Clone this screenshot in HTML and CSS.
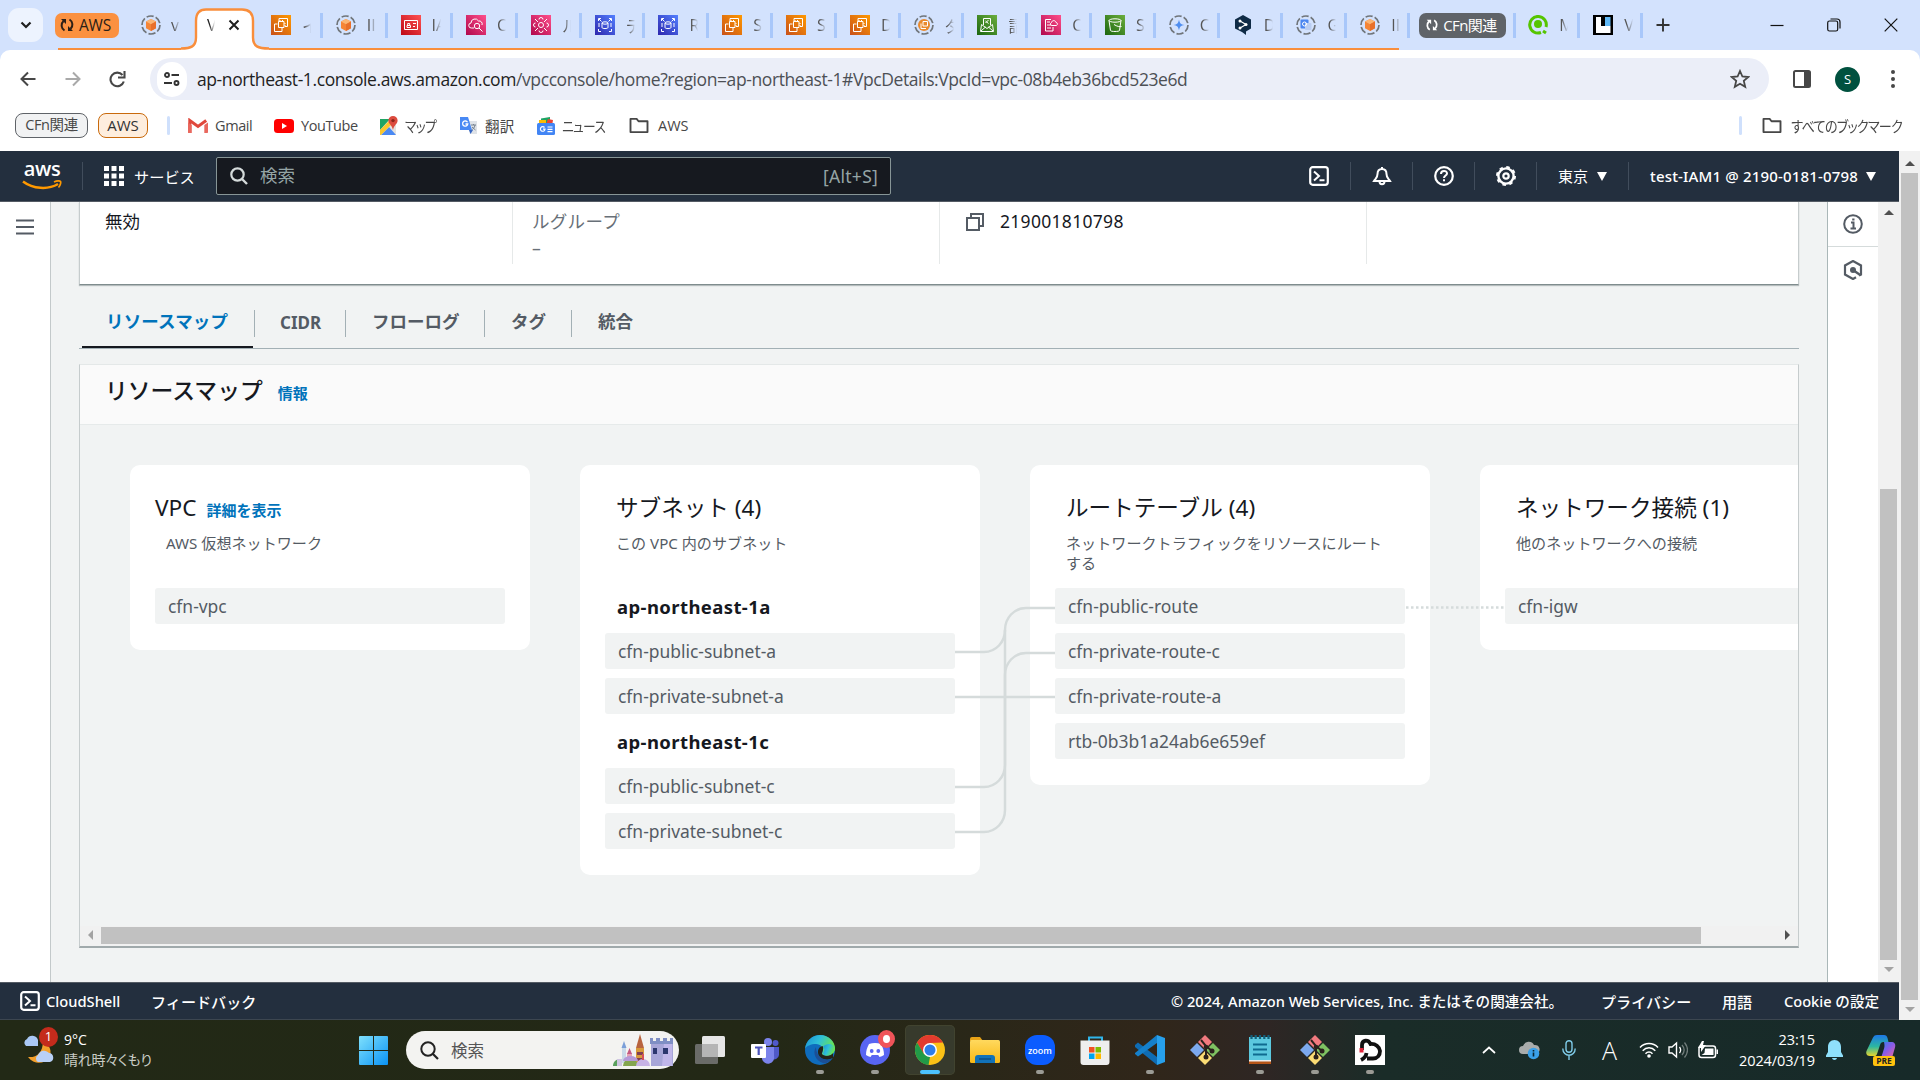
FILE: index.html
```html
<!DOCTYPE html>
<html lang="ja">
<head>
<meta charset="utf-8">
<title>VPC コンソール</title>
<link rel="stylesheet" href="styles.css">
</head>
<body>
<svg class="defs" width="0" height="0">
  <defs>
    <linearGradient id="g-or" x1="0" y1="1" x2="1" y2="0"><stop offset="0" stop-color="#c8511b"/><stop offset="1" stop-color="#f90"/></linearGradient>
    <linearGradient id="g-rd" x1="0" y1="1" x2="1" y2="0"><stop offset="0" stop-color="#bd0816"/><stop offset="1" stop-color="#ff5252"/></linearGradient>
    <linearGradient id="g-pk" x1="0" y1="1" x2="1" y2="0"><stop offset="0" stop-color="#b0084d"/><stop offset="1" stop-color="#ff4f8b"/></linearGradient>
    <linearGradient id="g-bl" x1="0" y1="1" x2="1" y2="0"><stop offset="0" stop-color="#2e27ad"/><stop offset="1" stop-color="#527fff"/></linearGradient>
    <linearGradient id="g-gr" x1="0" y1="1" x2="1" y2="0"><stop offset="0" stop-color="#1b660f"/><stop offset="1" stop-color="#6cae3e"/></linearGradient>
    <linearGradient id="g-win" x1="0" y1="0" x2="1" y2="1"><stop offset="0" stop-color="#7fe0fc"/><stop offset="1" stop-color="#0a93f5"/></linearGradient>
    <linearGradient id="g-edge" x1="0" y1="0" x2="1" y2="0.4"><stop offset="0" stop-color="#1b8fd6"/><stop offset=".5" stop-color="#2fc0d8"/><stop offset="1" stop-color="#6ce64c"/></linearGradient>
    <linearGradient id="g-fold" x1="0" y1="0" x2="0" y2="1"><stop offset="0" stop-color="#ffd95e"/><stop offset="1" stop-color="#f9b916"/></linearGradient>
    <linearGradient id="g-cop" x1="0" y1="0" x2="1" y2="1"><stop offset="0" stop-color="#1a8cf0"/><stop offset=".5" stop-color="#8a5be8"/><stop offset="1" stop-color="#ff6b8a"/></linearGradient>
    <linearGradient id="g-cop2" x1="0" y1="0" x2="0" y2="1"><stop offset="0" stop-color="#1d78e8"/><stop offset=".55" stop-color="#2cb7a0"/><stop offset="1" stop-color="#e8d52c"/></linearGradient>
    <symbol id="ring" viewBox="0 0 20 20"><circle cx="10" cy="10" r="9" fill="none" stroke="#70757a" stroke-width="1.7" stroke-dasharray="7.2 2.2"/></symbol>
    <symbol id="cube" viewBox="0 0 20 20"><use href="#ring"/><path d="M10 4l5 2.6v6.6L10 16l-5-2.8V6.600z" fill="#f58536"/><path d="M10 4l5 2.600-5 2.600-5-2.600z" fill="#fbb573"/><path d="M10 9.200l5-2.600v6.600L10 16z" fill="#e8702a"/></symbol>
    <symbol id="ec2" viewBox="0 0 20 20"><path fill="url(#g-or)" d="M0 0h20v20H0z"/><path fill="none" stroke="#fff" d="M6.500 9H3.500v7.500H11V13M8 3.500h8.500v8H14M8 3.500v3M7.500 6.500h5.500v6H7.500zM9 5v1M11.500 5v1M13.500 8.500h1M13.500 10.500h1"/></symbol>
    <symbol id="iam" viewBox="0 0 20 20"><path fill="url(#g-rd)" d="M0 0h20v20H0z"/><path fill="none" stroke="#fff" d="M3.500 5.500h13v9h-13zM6 10.500h3.500v2H6zM6.700 10V8.500h2V10M12 8.500h3M12 11.500h2"/></symbol>
    <symbol id="cw" viewBox="0 0 20 20"><path fill="url(#g-pk)" d="M0 0h20v20H0z"/><path fill="none" stroke="#fff" d="M8 13H5.500a2.500 2.500 0 0 1-.5-5 4 4 0 0 1 7.500-2 3 3 0 0 1 3.500 4M13 13l3.500 3.500"/><circle cx="11" cy="11" r="2.700" fill="none" stroke="#fff"/></symbol>
    <symbol id="rules" viewBox="0 0 20 20"><path fill="url(#g-pk)" d="M0 0h20v20H0z"/><circle cx="10" cy="10" r="2.500" fill="none" stroke="#fff"/><path d="M4 4l3 3M16 4l-3 3M4 16l3-3M16 16l-3-3M8 4.500a2 2 0 1 1 4 0M8 15.500a2 2 0 1 0 4 0M4.500 8a2 2 0 1 0 0 4M15.500 8a2 2 0 1 1 0 4" fill="none" stroke="#fff"/></symbol>
    <symbol id="rds" viewBox="0 0 20 20"><path fill="url(#g-bl)" d="M0 0h20v20H0z"/><path fill="none" stroke="#fff" d="M3.500 6V3.500H6M14 3.500h2.500V6M3.500 14v2.500H6M14 16.500h2.500V14M4 8v4M16 8v4M7 8v4.500c0 1.400 6 1.400 6 0V8M4 4l2.500 2.500M16 4l-2.500 2.500"/><ellipse cx="10" cy="8" rx="3" ry="1.200" fill="none" stroke="#fff"/></symbol>
    <symbol id="mail" viewBox="0 0 20 20"><path fill="url(#g-gr)" d="M0 0h20v20H0z"/><path fill="none" stroke="#fff" d="M6.500 10V3.500h7V10M4.500 9.500L3.500 16.500h13l-1-7-5.500 4zM4 16l4.500-4M16 16l-4.500-4M8.500 6l3 2.500M11.500 5l-3 3"/></symbol>
    <symbol id="cfn" viewBox="0 0 20 20"><path fill="url(#g-pk)" d="M0 0h20v20H0z"/><path fill="none" stroke="#fff" d="M12 12v4H4.500V4.500H10M6 7h3M6 10h4M6 13h4M11 10.500h4.500c1.500-1 1-3-.5-3-.5-2.500-4-2.500-4.500 0-1.500.5-1.500 3 .5 3z"/></symbol>
    <symbol id="s3" viewBox="0 0 20 20"><path fill="url(#g-gr)" d="M0 0h20v20H0z"/><path fill="none" stroke="#fff" d="M4 5.500l1.500 10c0 1.300 9 1.300 9 0L16 5.500M9 9.500c3 2 6 2.500 7.500 2"/><ellipse cx="10" cy="5.500" rx="6" ry="1.700" fill="none" stroke="#fff"/></symbol>
    <symbol id="sync" viewBox="0 0 16 16"><path fill="none" stroke="currentColor" stroke-width="2" d="M5.500 13.500A6 6 0 0 1 4.500 4M10.500 2.500A6 6 0 0 1 11.500 12"/><path fill="currentColor" d="M2 2h5v5zM14 14H9V9z"/></symbol>
    <symbol id="folder" viewBox="0 0 22 18"><path d="M2 2h6.500l2 2.500H20V16H2z" fill="none" stroke="#474747" stroke-width="2" stroke-linejoin="round"/></symbol>
    <symbol id="shell" viewBox="0 0 20 20"><rect x="1.200" y="1.200" width="17.600" height="17.600" rx="2.500" fill="none" stroke="#fff" stroke-width="2.200"/><path d="M5 5.500l5 4.500-5 4.500M10.500 14.300h5" fill="none" stroke="#fff" stroke-width="2"/></symbol>
    <symbol id="git" viewBox="0 0 30 30"><path d="M15 0l7 7-7 7-7-7z" fill="#f27a7f"/><path d="M23 8l7 7-7 7-7-7z" fill="#7fc262"/><path d="M7 8l7 7-7 7-7-7z" fill="#7ca9ee"/><path d="M15 16l7 7-7 7-7-7z" fill="#fbdc74"/><path d="M11 5l5 6v11M16 11l6 5" stroke="#2b211c" stroke-width="2" fill="none"/><circle cx="16" cy="12" r="2.300" fill="#2b211c"/><circle cx="16" cy="22" r="2.500" fill="#2b211c"/><circle cx="22" cy="16" r="2.500" fill="#2b211c"/></symbol>
  </defs>
</svg>

<div class="screen">
  <header class="tabstrip">
    <div class="tabsearch"><svg width="12" height="8" viewBox="0 0 12 8"><path d="M1.500 1.500L6 6l4.500-4.500" fill="none" stroke="#1f1f1f" stroke-width="2.200"/></svg></div>
    <div class="chip chip-orange"><svg width="16" height="16"><use href="#sync"/></svg><span>AWS</span></div>
    <div class="tab tab-first"><svg width="20" height="20"><use href="#cube"/></svg><span class="t">v</span></div>
    <div class="tab-active">
      <svg class="tab-shape" width="88" height="42" viewBox="0 0 88 42"><path d="M0 42v-1.500c10 0 15-2 15-11V13C15 5 19 1.500 25 1.500h36c7 0 11 4 11 11.500v16.500c0 9 5 11 16 11V42z" fill="#fff"/><path d="M0 40.500c10 0 15-2 15-11V13C15 5 19 1.500 25 1.500h36c7 0 11 4 11 11.500v16.500c0 9 5 11 16 11" fill="none" stroke="#f98e3c" stroke-width="2.400"/></svg>
      <span class="t">V</span><svg class="x" width="12" height="12" viewBox="0 0 12 12"><path d="M1.500 1.500l9 9M10.500 1.500l-9 9" stroke="#1f1f1f" stroke-width="2"/></svg>
    </div>
    <div class="tab w65"><svg width="20" height="20"><use href="#ec2"/></svg><span class="t">イ</span></div>
    <div class="tab w65"><svg width="20" height="20"><use href="#cube"/></svg><span class="t">II</span></div>
    <div class="tab w66"><svg width="20" height="20"><use href="#iam"/></svg><span class="t">IA</span></div>
    <div class="tab w65"><svg width="20" height="20"><use href="#cw"/></svg><span class="t">C</span></div>
    <div class="tab"><svg width="20" height="20"><use href="#rules"/></svg><span class="t">ル</span></div>
    <div class="tab"><svg width="20" height="20"><use href="#rds"/></svg><span class="t">デ</span></div>
    <div class="tab"><svg width="20" height="20"><use href="#rds"/></svg><span class="t">R</span></div>
    <div class="tab"><svg width="20" height="20"><use href="#ec2"/></svg><span class="t">S</span></div>
    <div class="tab"><svg width="20" height="20"><use href="#ec2"/></svg><span class="t">S</span></div>
    <div class="tab"><svg width="20" height="20"><use href="#ec2"/></svg><span class="t">D</span></div>
    <div class="tab"><svg width="20" height="20" viewBox="0 0 20 20"><use href="#ring"/><circle cx="10" cy="10" r="6" fill="#e98a2c"/><path d="M7 8.500v5h5M9 6.500h4.500V11H9z" stroke="#fff" fill="none"/></svg><span class="t">ダ</span></div>
    <div class="tab"><svg width="20" height="20"><use href="#mail"/></svg><span class="t">請</span></div>
    <div class="tab"><svg width="20" height="20"><use href="#cfn"/></svg><span class="t">C</span></div>
    <div class="tab"><svg width="20" height="20"><use href="#s3"/></svg><span class="t">S</span></div>
    <div class="tab"><svg width="20" height="20" viewBox="0 0 20 20"><use href="#ring"/><path d="M10 4.500c.6 3.700 1.800 4.900 5.500 5.500-3.700.6-4.900 1.800-5.500 5.500-.6-3.700-1.800-4.900-5.500-5.500 3.700-.6 4.900-1.800 5.500-5.500z" fill="#4f8ef0"/></svg><span class="t">C</span></div>
    <div class="tab"><svg width="20" height="20" viewBox="0 0 20 20"><path d="M10 0l8 4.500v9L13 16.500V20l-4-3-7-3.500v-9z" fill="#0f2b46"/><path d="M7 6l6 3.500L7 13" stroke="#fff" stroke-width="1.200" fill="none"/><circle cx="7" cy="6" r="1.500" fill="#fff"/><circle cx="13" cy="9.500" r="1.500" fill="#fff"/><circle cx="7" cy="13" r="1.500" fill="#fff"/></svg><span class="t">D</span></div>
    <div class="tab"><svg width="20" height="20" viewBox="0 0 20 20"><use href="#ring"/><rect x="4.500" y="4.500" width="8" height="9" rx="1" fill="#4a86f0"/><rect x="9" y="8" width="6.500" height="7" rx="1" fill="#b9cdf2"/><circle cx="8.500" cy="9" r="2" fill="none" stroke="#fff"/></svg><span class="t">G</span></div>
    <div class="tab w63"><svg width="20" height="20"><use href="#cube"/></svg><span class="t">II</span></div>
    <div class="chip chip-grey"><svg width="14" height="14"><use href="#sync"/></svg><span>CFn関連</span></div>
    <div class="tab tab-sepl"><svg width="20" height="20" viewBox="0 0 20 20"><path d="M13 17.500A8.300 8.300 0 1 1 18 12" fill="none" stroke="#55c500" stroke-width="3"/><circle cx="10" cy="9" r="4" fill="#55c500"/><path d="M15 16l3 2" stroke="#55c500" stroke-width="3"/></svg><span class="t">M</span></div>
    <div class="tab w63"><svg width="20" height="20" viewBox="0 0 20 20"><path d="M0 0h20v20H0z"/><path d="M3 2h5v9h9.500v7H3z" fill="#fff"/><path d="M12 2h5.500v9H12z" fill="#60b8f5"/></svg><span class="t">V</span></div>
    <svg class="plus" width="14" height="14" viewBox="0 0 14 14"><path d="M7 .5v13M.5 7h13" stroke="#333" stroke-width="1.900"/></svg>
    <div class="winbtns">
      <svg width="14" height="14" viewBox="0 0 14 14"><path d="M.5 7.500h13" stroke="#111" stroke-width="1.200"/></svg>
      <svg width="14" height="14" viewBox="0 0 14 14"><rect x=".7" y="3" width="10" height="10" rx="1.800" fill="none" stroke="#111" stroke-width="1.200"/><path d="M3.500 1h6.500a3 3 0 0 1 3 3v6.500" fill="none" stroke="#111" stroke-width="1.200"/></svg>
      <svg width="14" height="14" viewBox="0 0 14 14"><path d="M.7.700l12.600 12.600M13.300.7L.7 13.300" stroke="#111" stroke-width="1.200"/></svg>
    </div>
  </header>

  <div class="toolbar">
    <svg class="ic-back" width="16" height="16" viewBox="0 0 16 16"><path d="M15.500 8H1.800M8 1.500L1.500 8 8 14.500" fill="none" stroke="#474747" stroke-width="2"/></svg>
    <svg class="ic-fwd" width="16" height="16" viewBox="0 0 16 16"><path d="M.5 8h13.700M8 1.500L14.500 8 8 14.500" fill="none" stroke="#a9a9a9" stroke-width="2"/></svg>
    <svg class="ic-rel" width="17" height="17" viewBox="0 0 17 17"><path d="M14.800 10.500A6.800 6.800 0 1 1 13.500 4M15.500 0v6.500H9" fill="none" stroke="#474747" stroke-width="2.100"/></svg>
    <div class="omni">
      <div class="site"><svg width="16" height="14" viewBox="0 0 16 14"><circle cx="3" cy="3" r="2" fill="none" stroke="#333" stroke-width="1.900"/><path d="M7.500 3H15M0 11h8" stroke="#333" stroke-width="1.900"/><circle cx="12.500" cy="11" r="2" fill="none" stroke="#333" stroke-width="1.900"/></svg></div>
      <span class="url"><b>ap-northeast-1.console.aws.amazon.com</b>/vpcconsole/home?region=ap-northeast-1#VpcDetails:VpcId=vpc-08b4eb36bcd523e6d</span>
      <svg class="star" width="20" height="20" viewBox="0 0 20 20"><path d="M10 2l2.400 5.500 5.900.5-4.500 3.900 1.400 5.900L10 14.700l-5.200 3.100 1.400-5.900L1.700 8l5.900-.5z" fill="none" stroke="#474747" stroke-width="1.800"/></svg>
    </div>
    <svg class="panel" width="18" height="18" viewBox="0 0 18 18"><rect x="1" y="1" width="16" height="16" rx="1.500" fill="none" stroke="#474747" stroke-width="2"/><path d="M11 1h6v16h-6z" fill="#474747"/></svg>
    <div class="avatar">S</div>
    <svg class="dots" width="4" height="18" viewBox="0 0 4 18"><circle cx="2" cy="2" r="2" fill="#474747"/><circle cx="2" cy="9" r="2" fill="#474747"/><circle cx="2" cy="16" r="2" fill="#474747"/></svg>
  </div>

  <div class="bookmarks">
    <div class="bchip grey">CFn関連</div>
    <div class="bchip orange">AWS</div>
    <i class="bsep"></i>
    <div class="bm w-gmail"><svg width="20" height="16" viewBox="0 0 20 16"><path d="M1.800 15V2.500l8.200 6 8.200-6" fill="none" stroke="#e0483c" stroke-width="3"/><path d="M0 4.500v9.500c0 .6.400 1 1 1h2.700V7z" fill="#e9685e"/><path d="M20 4.500v9.500c0 .6-.4 1-1 1h-2.700V7z" fill="#e9685e"/></svg><span>Gmail</span></div>
    <div class="bm w-yt"><svg width="20" height="14" viewBox="0 0 20 14"><rect width="20" height="14" rx="3.500" fill="#f00"/><path d="M8 4l5 3-5 3z" fill="#fff"/></svg><span>YouTube</span></div>
    <div class="bm w-map"><svg width="19" height="20" viewBox="0 0 19 20"><path d="M1 3h16v16H1z" fill="#e5e3df"/><path d="M1 3h10L1 14z" fill="#1fa463"/><path d="M2 19l8-8 7 8z" fill="#4a89f3"/><path d="M1 14L12 3l3 3L2 19H1z" fill="#fbc62d"/><path d="M14 0a4.600 4.600 0 0 0-4.600 4.600C9.400 8 13 9 14 14c1-5 4.600-6 4.600-9.400A4.600 4.600 0 0 0 14 0z" fill="#dc4b3e"/><circle cx="14" cy="4.600" r="1.700" fill="#8c251a"/></svg><span class="kana">マップ</span></div>
    <div class="bm w-tr"><svg width="19" height="19" viewBox="0 0 19 19"><path d="M7 5h11v13H11z" fill="#dfe3e8"/><path d="M1 1h8l4 13H1z" fill="#4889f4"/><path d="M10 14h4l-2.500 4z" fill="#3364c4"/><path d="M8.500 6.300A2.600 2.600 0 1 0 8.800 8H6.500" fill="none" stroke="#fff" stroke-width="1.300"/><path d="M12 9h5M14.500 8v1M16 9c-.5 3-2 4-3.500 5M13 11l3.500 3" stroke="#76828f" fill="none"/></svg><span class="kanji">翻訳</span></div>
    <div class="bm w-nw"><svg width="18" height="18" viewBox="0 0 18 18"><path d="M4 1.500l9-1.500V8H4z" fill="#1fa463"/><path d="M11 2l5 1-1 6-6-2z" fill="#ea4335"/><path d="M2 3h7v7H2z" fill="#fbbc04"/><rect y="6" width="18" height="12" rx="1.500" fill="#4285f4"/><path d="M7.500 10.500A2.300 2.300 0 1 0 8 12.200H6M10.500 10h5M10.500 12.300h5M10.500 14.600h5" stroke="#fff" stroke-width="1.200" fill="none"/></svg><span class="kana">ニュース</span></div>
    <div class="bm"><svg width="22" height="17"><use href="#folder"/></svg><span>AWS</span></div>
    <div class="allbm"><i class="bsep"></i><svg width="22" height="17"><use href="#folder"/></svg><span class="kana kana-end">すべてのブックマーク</span></div>
  </div>

  <div class="page">
    <div class="console">
      <nav class="awsnav">
        <div class="awslogo"><span>aws</span><svg width="40" height="12" viewBox="0 0 40 12"><path d="M1 1.500c10 7.500 25 8.500 35 2.500" fill="none" stroke="#f90" stroke-width="2.500"/><path d="M32 2c3-1.500 6-1.300 6.500-.5s0 4-2 6" fill="none" stroke="#f90" stroke-width="1.700"/></svg></div>
        <i class="nsep"></i>
        <svg class="grid9" width="20" height="20" viewBox="0 0 20 20"><path d="M0 0h5v5H0zM7.500 0h5v5h-5zM15 0h5v5h-5zM0 7.500h5v5H0zM7.500 7.500h5v5h-5zM15 7.500h5v5h-5zM0 15h5v5H0zM7.500 15h5v5h-5zM15 15h5v5h-5z" fill="#fff"/></svg>
        <span class="svc">サービス</span>
        <div class="search"><svg width="18" height="18" viewBox="0 0 18 18"><circle cx="7.500" cy="7.500" r="6.200" fill="none" stroke="#d5dbdb" stroke-width="2.200"/><path d="M12 12l5 5" stroke="#d5dbdb" stroke-width="2.400"/></svg><span class="ph">検索</span><span class="alt">[Alt+S]</span></div>
        <div class="nr">
          <div class="nb b1"><svg width="20" height="20"><use href="#shell"/></svg></div>
          <div class="nb b2"><svg width="20" height="20" viewBox="0 0 20 20"><path d="M10 1v2M10 3c-3.500 0-4.500 2.500-4.500 5 0 4-2 4.500-3.500 7h16c-1.500-2.500-3.500-3-3.500-7 0-2.500-1-5-4.500-5z" fill="none" stroke="#fff" stroke-width="2"/><path d="M7.500 15.500a2.500 2.700 0 0 0 5 0" fill="none" stroke="#fff" stroke-width="2"/></svg></div>
          <div class="nb b3"><svg width="20" height="20" viewBox="0 0 20 20"><circle cx="10" cy="10" r="8.800" fill="none" stroke="#fff" stroke-width="2.200"/><path d="M7 8c0-4 6-4 6-.5 0 2-3 2-3 4.500M10 13.200v2" fill="none" stroke="#fff" stroke-width="2"/></svg></div>
          <div class="nb b4"><svg width="20" height="20" viewBox="0 0 20 20"><circle cx="10" cy="10" r="7.600" fill="none" stroke="#fff" stroke-width="2.400"/><circle cx="10" cy="10" r="9" fill="none" stroke="#fff" stroke-width="2" stroke-dasharray="3.500 3.570"/><circle cx="10" cy="10" r="2.700" fill="none" stroke="#fff" stroke-width="2.200"/></svg></div>
          <div class="nb region"><span>東京</span><i class="tri"></i></div>
          <div class="acct"><span>test-IAM1 @ 2190-0181-0798</span><i class="tri"></i></div>
        </div>
      </nav>

      <div class="body">
        <aside class="left"><svg width="18" height="16" viewBox="0 0 18 16"><path d="M0 1.500h18M0 8h18M0 14.500h18" stroke="#545b64" stroke-width="2.200"/></svg></aside>
        <main class="main">
          <section class="info">
            <div class="c"><span class="dark">無効</span></div>
            <div class="c"><span class="lab">ルグループ</span><span class="dash">–</span></div>
            <div class="c"><span class="cp"><svg width="18" height="18" viewBox="0 0 18 18"><path d="M1 5h12v12H1zM5 4V1h12v12h-3" fill="none" stroke="#545b64" stroke-width="2"/></svg><span class="num">219001810798</span></span></div>
            <div class="c"></div>
          </section>
          <div class="tabs">
            <div class="tb on">リソースマップ</div><div class="tb cidr">CIDR</div><div class="tb flow">フローログ</div><div class="tb tag">タグ</div><div class="tb integ">統合</div>
          </div>
          <section class="map">
            <h2>リソースマップ<a>情報</a></h2>
            <div class="canvas">
              <div class="card">
                <div class="hd vpc"><h3>VPC<a>詳細を表示</a></h3><p>AWS 仮想ネットワーク</p></div>
                <div class="item">cfn-vpc</div>
              </div>
              <div class="card">
                <div class="hd"><h3>サブネット (4)</h3><p>この VPC 内のサブネット</p></div>
                <h4>ap-northeast-1a</h4>
                <div class="item">cfn-public-subnet-a</div>
                <div class="item">cfn-private-subnet-a</div>
                <h4>ap-northeast-1c</h4>
                <div class="item">cfn-public-subnet-c</div>
                <div class="item">cfn-private-subnet-c</div>
              </div>
              <div class="card">
                <div class="hd"><h3>ルートテーブル (4)</h3><p>ネットワークトラフィックをリソースにルート<br>する</p></div>
                <div class="item">cfn-public-route</div>
                <div class="item">cfn-private-route-c</div>
                <div class="item">cfn-private-route-a</div>
                <div class="item">rtb-0b3b1a24ab6e659ef</div>
              </div>
              <div class="card">
                <div class="hd"><h3>ネットワーク接続 (1)</h3><p>他のネットワークへの接続</p></div>
                <div class="item">cfn-igw</div>
              </div>
              <svg class="wires" width="560" height="260" viewBox="0 0 560 260"><g fill="none" stroke="#d5dbdb" stroke-width="2.500"><path d="M0 62h29c12 0 21-10 21-22 0-12 9-22 21-22h29"/><path d="M0 107h100"/><path d="M0 197h29c12 0 21-10 21-22V40"/><path d="M0 242h29c12 0 21-10 21-22V85c0-12 9-22 21-22h29"/><path d="M451 17.500h99" stroke-width="2.500" stroke-dasharray="2.500 2.500"/></g></svg>
            </div>
            <div class="hbar"><i class="al"></i><i class="thumb"></i><i class="ar"></i></div>
          </section>
        </main>
        <aside class="right">
          <div class="ri"><svg width="20" height="20" viewBox="0 0 20 20"><circle cx="10" cy="10" r="8.800" fill="none" stroke="#545b64" stroke-width="2"/><path d="M8 8.500h2.500v6M7.500 14.500h5.500M9.200 5.500h2.300" stroke="#545b64" stroke-width="2" fill="none"/></svg></div>
          <div class="ri"><svg width="20" height="20" viewBox="0 0 20 20"><path d="M13 17.200L10 19l-8-4.500v-9L10 1l8 4.500v9l-2 1" fill="none" stroke="#545b64" stroke-width="2.200"/><circle cx="10" cy="10" r="3" fill="#545b64"/><path d="M10 10l6.500 4.500" stroke="#545b64" stroke-width="2.400"/></svg></div>
        </aside>
        <div class="vbar inner"><i class="up"></i><i class="vthumb"></i><i class="dn"></i></div>
      </div>

      <footer class="awsfoot">
        <svg width="20" height="20"><use href="#shell"/></svg><span class="cs">CloudShell</span><span class="fb">フィードバック</span>
        <span class="copy">© 2024, Amazon Web Services, Inc. またはその関連会社。</span><span class="pv">プライバシー</span><span class="yg">用語</span><span class="ck">Cookie の設定</span>
      </footer>
    </div>
    <div class="vbar outer"><i class="up"></i><i class="vthumb"></i><i class="dn"></i></div>
  </div>

  <div class="taskbar">
    <div class="weather"><svg width="36" height="38" viewBox="0 0 36 38"><path d="M3 15a4 4 0 0 1 1-7 6 6 0 0 1 11 1v6z" fill="#a9c8f5"/><path d="M20 10c6 3 10 10 6 17-4 5-14 8-21-1 8 1 15-4 15-16z" fill="#f4a02c"/><path d="M15 31a4 4 0 0 1 0-7 6.500 6.500 0 0 1 11-2c5 0 6 8 1 9z" fill="#b9d0f7"/></svg><i class="badge">1</i><div class="wt"><span>9°C</span><span class="w2">晴れ時々くもり</span></div></div>
    <svg class="win" width="29" height="29" viewBox="0 0 29 29"><path d="M0 1a1 1 0 0 1 1-1h13v14H0zM15 0h13a1 1 0 0 1 1 1v13H15zM0 15h14v14H1a1 1 0 0 1-1-1zM15 15h14v13a1 1 0 0 1-1 1H15z" fill="url(#g-win)"/></svg>
    <div class="tsearch"><svg width="19" height="19" viewBox="0 0 19 19"><circle cx="8" cy="8" r="6.700" fill="none" stroke="#222" stroke-width="2"/><path d="M12.500 12.500l5.500 5.500" stroke="#222" stroke-width="2.200"/></svg><span>検索</span>
      <svg class="castle" width="60" height="34" viewBox="0 0 60 34"><path d="M37 10V5h3v3h3V5h4v3h3V5h4v3h3V5h3v28H38V11z" fill="#a7a6d8"/><path d="M37 5h3v3h3V5h4v3h3V5h4v3h3V5h3v6H37z" fill="#7f8fc4"/><path d="M51 11h8v22H49z" fill="#c0b7ea"/><path d="M40 15h4v6h-4zM50 15h5v6h-5z" fill="#2b376e"/><path d="M23 15h8v18h-8z" fill="#d79a3b"/><path d="M27 1l4 14h-8z" fill="#b8643f"/><path d="M24 19h6v3h-6zM24 25h6v3h-6z" fill="#7e3e55"/><path d="M9 14h4v16H9z" fill="#c9d9e8"/><path d="M11 8l2.500 7h-5z" fill="#7b9fd8"/><path d="M14 20h5v9h-5z" fill="#e5a2b4"/><path d="M16.500 15l2.500 6h-5z" fill="#c55a80"/><path d="M0 33c0-4 3-7 7-7v7z" fill="#5aa05c"/><path d="M10 33a7.500 7.500 0 0 1 15 0z" fill="#84a64f"/><path d="M10 28a7.500 5 0 0 1 15 0z" fill="#b59ad8"/><path d="M4 26h5v7H4z" fill="#cfc5e2"/><path d="M23 33a7 7 0 0 1 14 0z" fill="#c7b3e5"/><path d="M30 21v6" stroke="#d4505a" stroke-width="2"/></svg></div>
    <div class="apps">
      <div class="app"><svg width="30" height="30" viewBox="0 0 30 30"><rect x="7" y="1" width="23" height="21" rx="1.500" fill="#e6e6e6"/><rect y="9" width="23" height="20" rx="1.500" fill="#777" opacity=".85"/><path d="M7 9h16v13H7z" fill="#b5b5b5"/></svg></div>
      <div class="app"><svg width="28" height="28" viewBox="0 0 28 28"><circle cx="17" cy="6" r="4" fill="#7b83eb"/><circle cx="24.500" cy="7" r="3" fill="#5059c9"/><path d="M21 11h7v8a5 5 0 0 1-7 4z" fill="#5059c9"/><path d="M11 11h12v9a6 6 0 0 1-12 3z" fill="#7b83eb"/><rect y="8" width="15" height="14" rx="1" fill="#fff"/><path d="M4 11.500h7.500M7.700 11.500V19" stroke="#4b53bc" stroke-width="2.200"/></svg></div>
      <div class="app run"><svg width="30" height="30" viewBox="0 0 30 30"><circle cx="15" cy="15" r="15" fill="#0f6cbd"/><path d="M0 14C1 5 8 0 15 0c9 0 15 7 15 13 0 5-4 8-8 8-3 0-5-1-5-2s1-2 1-4-2-6-7-6C6 9 1 11 0 14z" fill="url(#g-edge)"/><path d="M11 12c-4 6 0 14 7 16 3 1 6-1 9-4-9 3-16-3-16-12z" fill="#1b4f96"/><path d="M17.500 11c2 3-1 6-.5 8 1 2 8 3 11-1v5c-6 3-14 1-15-5-.5-3 1-6 4.500-7z" fill="#242416"/><path d="M18 12c4 3-2 6 1 8 4 2 11-1 11-7-1-4-8-6-12-1z" fill="url(#g-edge)"/></svg></div>
      <div class="app run"><svg width="30" height="30" viewBox="0 0 30 30"><circle cx="15" cy="15" r="15" fill="#5865f2"/><path d="M9 9c4-1.500 8-1.500 12 0 2 3.500 3 7 3 11-1.500 1-3 1.700-4.500 2l-1.300-2h-6.400l-1.300 2C9 21.700 7.500 21 6 20c0-4 1-7.500 3-11z" fill="#fff"/><circle cx="11.700" cy="16" r="1.900" fill="#5865f2"/><circle cx="18.300" cy="16" r="1.900" fill="#5865f2"/></svg><i class="dbadge"></i></div>
      <div class="app run active"><svg width="30" height="30" viewBox="0 0 30 30"><circle cx="15" cy="15" r="15" fill="#fbc116"/><path d="M2 7.500A15 15 0 0 1 28 7.500L15 8 8.500 18.700z" fill="#e33b2e"/><path d="M2 7.500L8.800 18.800 15 22l-1.500 8A15 15 0 0 1 2 7.500z" fill="#229a48"/><circle cx="15" cy="15" r="7" fill="#fff"/><circle cx="15" cy="15" r="5.500" fill="#2f7de9"/></svg></div>
      <div class="app"><svg width="30" height="28" viewBox="0 0 30 28"><path d="M0 3a2 2 0 0 1 2-2h8l3 4h-13z" fill="#e8a317"/><rect y="4" width="30" height="23" rx="1.500" fill="url(#g-fold)"/><path d="M5 27v-5a3 3 0 0 1 3-3h14a3 3 0 0 1 3 3v5z" fill="#1272b8"/><path d="M9 23h12" stroke="#0b4f86" stroke-width="1.500"/></svg></div>
      <div class="app run"><svg width="30" height="30" viewBox="0 0 30 30"><rect width="30" height="30" rx="12" fill="#0b5cff"/></svg><span class="zt">zoom</span></div>
      <div class="app"><svg width="30" height="30" viewBox="0 0 30 30"><path d="M9 7V2.500h13V7" fill="none" stroke="#2fb5ea" stroke-width="2"/><path d="M.5 5.500h29V27a3 3 0 0 1-3 3h-23a3 3 0 0 1-3-3z" fill="#eee"/><path d="M9 12h5.500v5.500H9z" fill="#f25022"/><path d="M15.500 12H21v5.500h-5.500z" fill="#7fba00"/><path d="M9 18.500h5.500V24H9z" fill="#00a4ef"/><path d="M15.500 18.500H21V24h-5.500z" fill="#ffb900"/></svg></div>
      <div class="app run"><svg width="30" height="30" viewBox="0 0 30 30"><path d="M0 10l3-2.500L22 22v8L0 12z" fill="#0f6cb3"/><path d="M0 19l3 2.500L22 8V0L0 18z" fill="#1580cb"/><path d="M22 0l8 3v24l-8 3z" fill="#27a0ec"/></svg></div>
      <div class="app"><svg width="30" height="30"><use href="#git"/></svg></div>
      <div class="app run"><svg width="22" height="30" viewBox="0 0 22 30"><path d="M0 2h22v24H0z" fill="#5bc8de"/><path d="M0 26h22v3H0z" fill="#b65518"/><path d="M0 25h22v1.500H0z" fill="#eee"/><path d="M4 9.500h14M4 14.500h14M4 19.500h14" stroke="#0f6b8f" stroke-width="2"/><path d="M2.500 0v4M6.700 0v4M11 0v4M15.300 0v4M19.500 0v4" stroke="#12607c" stroke-width="2.200"/></svg></div>
      <div class="app run"><svg width="30" height="30"><use href="#git"/></svg></div>
      <div class="app run"><svg width="30" height="30" viewBox="0 0 30 30"><path fill="#fff" d="M0 0h30v30H0z"/><path d="M7 15V10C7 5 13 4 15.500 9c5-.5 9 3 9.500 7 0 4-2.500 7.500-7 7.500H12M6 25c3-1.500 5-3 5.500-7" fill="none" stroke="#111" stroke-width="3.800"/><path d="M4.500 13h4v4.500h-4z" fill="#e0263c"/></svg></div>
    </div>
    <div class="tray">
      <svg class="t1" width="14" height="8" viewBox="0 0 14 8"><path d="M1 7l6-5.500L13 7" fill="none" stroke="#fff" stroke-width="1.700"/></svg>
      <svg class="t2" width="21" height="20" viewBox="0 0 21 20"><path d="M4 14a4 4 0 0 1 0-8 6 6 0 0 1 11-1 4.500 4.500 0 0 1 2 9z" fill="#a9acab"/><circle cx="14.500" cy="13.500" r="5.800" fill="#3aa0e8"/><path d="M14.500 12.500v4M14.500 10v1.400" stroke="#0b2530" stroke-width="1.600"/></svg>
      <svg class="t3" width="14" height="20" viewBox="0 0 14 20"><rect x="4" y=".7" width="6" height="11.500" rx="3" fill="none" stroke="#7fcbe8" stroke-width="1.400"/><path d="M.8 8.500c0 9 12.400 9 12.400 0M7 15.500V20" fill="none" stroke="#7fcbe8" stroke-width="1.400"/></svg>
      <span class="ime">A</span>
      <svg class="t4" width="20" height="16" viewBox="0 0 20 16"><path d="M1 5.500c5-5.300 13-5.300 18 0M3.700 8.700c3.600-3.800 9-3.800 12.600 0M6.500 11.700c2-2.200 5-2.200 7 0" fill="none" stroke="#fff" stroke-width="1.500"/><circle cx="10" cy="14" r="1.800" fill="#fff"/></svg>
      <svg class="t5" width="20" height="18" viewBox="0 0 20 18"><path d="M1 6h3l4.500-4v14L4 12H1z" fill="none" stroke="#fff" stroke-width="1.400"/><path d="M11.500 6c1.500 2 1.500 4 0 6" stroke="#fff" fill="none" stroke-width="1.300"/><path d="M14 4c3 3.500 3 6.500 0 10M16.500 1.500c4 5 4 10 0 15" stroke="#6f7b79" fill="none" stroke-width="1.300"/></svg>
      <svg class="t6" width="21" height="18" viewBox="0 0 21 18"><rect x="1" y="5" width="16.500" height="11.500" rx="2.500" fill="none" stroke="#fff" stroke-width="1.500"/><path d="M7 7.500h8.500V14H3.500l3-2z" fill="#fff"/><path d="M18.500 8.500H20v4.500h-1.500zM4 0L0 7h3v4l5-7H5l1-4z" fill="#fff"/></svg>
      <div class="clock"><span>23:15</span><span>2024/03/19</span></div>
      <svg class="t7" width="17" height="20" viewBox="0 0 17 20"><path d="M8.500 0C4.500 0 2 3 2 7v5L0 15.500V17h17v-1.500L15 12V7c0-4-2.500-7-6.500-7zM6 18h5c-.5 2.500-4.500 2.500-5 0z" fill="#8fe0fb"/></svg>
      <div class="cop"><svg width="30" height="30" viewBox="0 0 30 30"><path d="M7 2.500C8 .8 9 0 11 0h7c2 0 3 1 3.500 3l1 4h-5c-2 0-3 1-3.500 3l-3 9c-.6 1.700-1.500 2-3 2H4c-3 0-4.500-2-3.500-5z" fill="url(#g-cop2)"/><path d="M18 7h7c3.500 0 5 2 4 5.500L26.500 21c-1 3-2 4-5 4H12c2 0 2.700-1 3.200-2.500l3-9.500c.7-2 0-5-.2-6z" fill="url(#g-cop)"/></svg><b>PRE</b></div>
    </div>
  </div>
</div>
</body>
</html>
```
FILE: styles.css
```css
* { box-sizing: border-box; }
body { margin: 0; overflow: hidden; font-family: "Noto Sans", "Noto Sans CJK JP", sans-serif; color: #16191f; }
svg { display: block; flex: none; }
i { font-style: normal; }
.defs { position: absolute; }
.screen { width: 1920px; height: 1080px; display: flex; flex-direction: column; background: #fff; overflow: hidden; }
.screen > * { flex: none; }

/* browser tab strip */
.tabstrip { height: 50px; background: linear-gradient(#f98e3c, #f98e3c) 58px 48px / 1341px 2px no-repeat #d3e2fd; display: flex; align-items: center; font: 16px "Open Sans", "Noto Sans CJK JP", sans-serif; color: #555; position: relative; z-index: 1; }
.tabstrip > * { flex: none; }
.tabsearch { width: 35px; height: 34px; margin-left: 8px; border-radius: 11px; background: #edf3fe; display: flex; align-items: center; justify-content: center; }
.chip { height: 25px; border-radius: 7px; display: flex; align-items: center; gap: 4px; font-size: 15.5px; letter-spacing: -.2px; white-space: nowrap; }
.chip-orange { width: 64px; margin-left: 12px; padding-left: 4px; background: #fb9140; color: #2c2017; }
.chip-grey { width: 87px; margin-left: 9px; padding-left: 6px; background: #5f6368; color: #fff; font-size: 15px; letter-spacing: -.6px; }
.chip-grey span { margin-top: -2px; }
.tab { width: 63.8px; height: 25px; display: flex; align-items: center; padding-left: 13px; gap: 11px; border-right: 3px solid #a8c7fa; }
.w63 { width: 63px; }
.w65 { width: 64.8px; }
.w66 { width: 65.5px; }
.tab-first { border: 0; width: 62px; padding-left: 22px; gap: 10px; }
.tab .t { width: 9px; overflow: hidden; white-space: nowrap; }
.tab .t, .tab-active .t { -webkit-mask-image: linear-gradient(90deg, #000 30%, transparent); mask-image: linear-gradient(90deg, #000 30%, transparent); }
.tab-active { width: 77px; height: 50px; position: relative; display: flex; align-items: center; padding-left: 26px; gap: 13px; }
.tab-active .t, .tab-active .x { position: relative; }
.tab-active .t { width: 8px; overflow: hidden; color: #222; }
.tab-shape { position: absolute; left: 0; top: 8px; }
.tab-sepl { width: 67px; margin-left: 7px; border-left: 3px solid #a8c7fa; padding-left: 12px; }
.plus { margin-left: 13px; }
.winbtns { margin-left: auto; margin-right: 22px; display: flex; gap: 43px; }

/* address row */
.toolbar { height: 58px; display: flex; align-items: center; background: #fff; border-radius: 10px 10px 0 0; box-shadow: 0 -10px 0 #d3e2fd; }
.toolbar > * { flex: none; }
.ic-back { margin-left: 20px; }
.ic-fwd { margin-left: 29px; }
.ic-rel { margin-left: 28px; }
.omni { width: 1619px; height: 42px; margin-left: 24px; border-radius: 21px; background: #ebeef8; display: flex; align-items: center; }
.site { width: 30px; height: 35px; margin-left: 7px; border-radius: 15px; background: #fff; display: flex; align-items: center; justify-content: center; }
.url { margin-left: 10px; font: 17.5px "Open Sans", sans-serif; color: #4d5055; letter-spacing: -.41px; white-space: nowrap; }
.url b { font-weight: 400; color: #1f1f1f; }
.star { margin-left: auto; margin-right: 19px; }
.panel { margin-left: 24px; }
.avatar { width: 25px; height: 25px; margin-left: 24px; border-radius: 50%; background: #00513f; color: #fff; font: 13px/25px "Open Sans", sans-serif; text-align: center; }
.dots { margin-left: 31px; }

/* bookmarks row */
.bookmarks { height: 43px; padding: 5px 18px 13px 15px; display: flex; align-items: center; font: 14.5px "Open Sans", "Noto Sans CJK JP", sans-serif; color: #474747; white-space: nowrap; }
.bookmarks > * { flex: none; }
.bchip { height: 25px; border-radius: 8px; border: 1.500px solid #5f6368; line-height: 22px; text-align: center; background: #f1f2f3; }
.bchip.grey { width: 73px; letter-spacing: -.4px; }
.bchip.orange { width: 50px; margin-left: 10px; border-color: #c96a0c; background: #feeede; color: #333; font-size: 15px; }
.bsep { width: 3px; height: 19px; margin: 0 0 0 19px; background: #cfe0fc; border-radius: 2px; }
.bm { display: flex; align-items: center; gap: 6px; letter-spacing: -.4px; }
.bm svg { margin-right: 1px; }
.w-gmail { margin-left: 18px; width: 86px; }
.w-yt { width: 105px; }
.w-map { width: 80px; }
.w-tr { width: 78px; }
.w-nw { width: 91px; }
.bm:nth-of-type(8) span { margin-left: 1px; letter-spacing: 0; }
.kanji { letter-spacing: .3px; }
.kana { display: inline-block; font-feature-settings: "palt"; letter-spacing: -.8px; transform: scaleX(.88); transform-origin: 0 50%; }
.kana-end { transform: scaleX(.9); transform-origin: 100% 50%; margin-left: -14px; }
.allbm { margin-left: auto; display: flex; align-items: center; gap: 10px; }
.allbm svg { margin-left: 9px; }

/* console page */
.page { height: 869px; display: flex; }
.console { width: 1899px; display: flex; flex-direction: column; }
.awsnav { height: 51px; flex: none; background: #232f3e; border-bottom: 1px solid #545b64; display: flex; align-items: center; color: #fff; white-space: nowrap; }
.awsnav > * { flex: none; }
.awslogo { width: 40px; margin-left: 22px; height: 29px; }
.awslogo span { display: block; height: 18px; font: 600 20px/14px "Open Sans", sans-serif; letter-spacing: -.3px; text-align: center; }
.nsep { width: 1px; height: 28px; margin-left: 20px; background: #414d5c; }
.grid9 { margin-left: 21px; }
.svc { margin-left: 10px; width: 62px; font-size: 15.2px; margin-top: -1px; }
.search { width: 675px; height: 38px; margin-left: 20px; background: #16191f; border: 1px solid #879596; border-radius: 2px; display: flex; align-items: center; padding: 0 12px 0 13px; color: #95a5a6; font-size: 17.5px; }
.search .ph { margin-left: 12px; margin-top: -3px; }
.search .alt { margin-left: auto; margin-top: -1px; letter-spacing: .25px; }
.nr { margin-left: auto; display: flex; height: 28px; font-size: 15px; }
.nb { border-right: 1px solid #414d5c; display: flex; align-items: center; justify-content: center; width: 62px; }
.b1 { width: 63px; }
.region { width: 92px; gap: 9px; }
.region span { margin-top: -2px; }
.tri { width: 0; height: 0; border: 5px solid transparent; border-top: 9px solid #fff; border-bottom: 0; }
.acct { display: flex; align-items: center; gap: 8px; margin-left: 21px; margin-right: 23px; font-weight: 500; letter-spacing: .17px; }

.body { height: 780px; flex: none; display: flex; background: #f1f3f3; }
.left { width: 51px; background: #fff; border-right: 1px solid #c3c9ca; padding: 17px 0 0 16px; }
.main { width: 1776px; padding: 0 28px; overflow: hidden; }
.info { height: 83px; margin-bottom: 13px; background: #fff; border: solid #c6cccd; border-width: 0 1px; border-bottom: 1px solid #7f8c8d; box-shadow: 0 1px 1px #b5bcbd; display: flex; font-size: 17.5px; line-height: 27px; }
.info .c { width: 427px; height: 62px; padding: 6px 0 0 19px; border-right: 1px solid #e6e9e9; display: flex; flex-direction: column; }
.info .c:first-child { width: 433px; padding-left: 25px; }
.info .c:last-child { border: 0; }
.lab, .dash { color: #687078; }
.lab { letter-spacing: .3px; }
.cp { display: flex; align-items: center; gap: 16px; margin-left: 7px; }
.num { letter-spacing: .3px; }
.tabs { height: 51px; border-bottom: 1px solid #a3b0b5; display: flex; font: 700 17.5px/27px "Noto Sans", "Noto Sans CJK JP", sans-serif; color: #545b64; padding-top: 12px; margin-bottom: 15px; white-space: nowrap; }
.tb { height: 27px; border-right: 1px solid #a3b0b5; padding-left: 25px; line-height: 23px; }
.tb.on { width: 176px; color: #0073bb; height: 38px; border-right: 0; padding-left: 27px; letter-spacing: .15px; background: linear-gradient(#16191f, #16191f) 3px 36px / 171px 2px no-repeat, linear-gradient(#a3b0b5, #a3b0b5) 175px 0 / 1px 27px no-repeat; }
.tb.cidr { width: 91px; line-height: 26px; font-size: 17px; }
.tb.flow { width: 139px; padding-left: 26px; }
.tb.tag { width: 87px; padding-left: 26px; }
.tb.integ { border: 0; padding-left: 26px; }
.map { height: 584px; background: #f1f3f3; border: 1px solid #c6cccd; border-top-color: #e4e8e8; border-bottom: 2px solid #a0a9ab; }
h2 { height: 60px; margin: 0; padding-left: 25px; font: 500 22.8px/52px "Noto Sans", "Noto Sans CJK JP", sans-serif; background: #fafafa; border-bottom: 1px solid #e6eaea; }
h2 a { margin-left: 15px; font-size: 15px; font-weight: 700; color: #0073bb; }
.canvas { position: relative; height: 501px; padding: 40px 0 0 50px; display: flex; gap: 50px; align-items: flex-start; overflow: hidden; }
.card { width: 400px; flex: none; background: #fff; border-radius: 10px; padding: 25px 25px 17px; font-size: 17.45px; }
.hd { height: 98px; padding-left: 11px; white-space: nowrap; }
.hd h3 { margin: 0; font-weight: 400; font-size: 22.6px; line-height: 35px; height: 34px; }
.hd h3 a { margin-left: 10px; font-size: 15px; font-weight: 700; color: #0073bb; }
.hd.vpc h3 { margin-left: -11px; }
.hd p { margin: 9px 0 0; font-size: 15.1px; line-height: 20px; color: #545b64; }
.card h4 { margin: 0; padding-left: 12px; height: 45px; font: 700 18.500px/38px "Noto Sans", sans-serif; letter-spacing: .4px; }
.item { height: 36px; margin-bottom: 9px; padding-left: 13px; line-height: 36px; background: #f1f3f3; border-radius: 3px; color: #545b64; }
.wires { position: absolute; left: 875px; top: 165px; }
.hbar { height: 20px; background: #f1f1f1; display: flex; align-items: center; padding-bottom: 2px; }
.hbar .thumb { width: 1600px; height: 17px; background: #c1c1c1; margin: 0 0 0 11px; }
.al, .ar { width: 0; height: 0; border: 5px solid transparent; }
.al { border-right: 5px solid #a3a3a3; border-left: 0; margin-left: 8px; margin-right: -3px; }
.ar { border-left: 5px solid #505050; border-right: 0; margin-left: 84px; }
.right { width: 51px; background: #fff; border-left: 1px solid #aab7b8; }
.ri { height: 44px; padding: 12px 0 0 15px; }
.ri + .ri { border-top: 1px solid #d5dbdb; padding-top: 13px; }
.vbar { width: 21px; background: #f1f1f1; display: flex; flex-direction: column; align-items: center; }
.up, .dn { width: 0; height: 0; border: 5px solid transparent; }
.up { border-bottom: 5px solid #505050; border-top: 0; }
.dn { border-top: 5px solid #a3a3a3; border-bottom: 0; }
.vthumb { width: 17px; background: #c1c1c1; }
.inner .up { margin-top: 8px; }
.inner .vthumb { height: 471px; margin-top: 274px; }
.inner .dn { margin-top: 7px; }
.outer .up { margin-top: 10px; }
.outer .vthumb { height: 827px; margin-top: 7px; }
.outer .dn { margin-top: 7px; }

.awsfoot { height: 38px; flex: none; background: #232f3e; border-top: 1px solid #545b64; border-bottom: 1px solid #3c4650; display: flex; align-items: center; padding-left: 20px; color: #fff; font-size: 15.1px; font-weight: 500; white-space: nowrap; }
.awsfoot span { flex: none; margin-top: -1px; }
.cs { margin-left: 6px; width: 105px; font-size: 14.7px; }
.fb { width: 1020px; }
.copy { width: 430px; font-size: 14.6px; }
.pv { width: 121px; }
.yg { width: 62px; }
.ck { font-size: 14.600px; }

/* windows taskbar */
.taskbar { height: 60px; background: linear-gradient(90deg, #222916 0, #232816 40%, #30261a 60%, #2e2624 66%, #1a2c28 72%, #172a29 100%); display: flex; color: #fff; font: 14px "Open Sans", "Noto Sans CJK JP", sans-serif; align-items: center; white-space: nowrap; }
.taskbar > * { flex: none; }
.weather { width: 359px; padding-left: 23px; display: flex; position: relative; align-items: center; }
.badge { position: absolute; left: 39px; top: -3px; width: 19px; height: 20px; border-radius: 50%; background: #c42b1c; text-align: center; line-height: 19px; font-size: 13px; }
.wt { margin-left: 5px; display: flex; flex-direction: column; line-height: 20px; }
.w2 { color: #c9ccc5; font-feature-settings: "palt"; letter-spacing: -.3px; }
.tsearch { margin-left: 18px; width: 273px; height: 38px; border-radius: 19px; background: #f3f3f1; display: flex; align-items: center; padding-left: 14px; color: #555; font-size: 16.5px; }
.tsearch span { margin-left: 12px; }
.castle { margin-left: auto; margin-right: 6px; }
.apps { display: flex; margin-left: 6px; width: 717px; }
.app { width: 50px; height: 50px; margin-right: 5px; display: flex; flex: none; align-items: center; justify-content: center; position: relative; border-radius: 5px; }
.app.run::after { content: ""; position: absolute; left: 21px; bottom: 1px; width: 8px; height: 4px; border-radius: 2px; background: #9b9b95; }
.app.active { background: #373a2c; box-shadow: 0 0 0 1px #41432f inset; }
.app.active::after { left: 15px; width: 20px; background: #4cc2ff; }
.dbadge { position: absolute; left: 28px; top: 5px; width: 17px; height: 18px; border-radius: 50%; background: #fff; border: 5px solid #f05459; }
.zt { position: absolute; color: #fff; font: 600 9px "Open Sans", sans-serif; }
.tray { display: flex; align-items: center; margin-left: 80px; }
.t2 { margin-left: 23px; }
.t3 { margin-left: 22px; }
.ime { margin-left: 26px; width: 15px; font: 300 25px "Open Sans", sans-serif; }
.t4 { margin-left: 22px; }
.t5 { margin-left: 9px; }
.t6 { margin-left: 10px; }
.clock { width: 96px; display: flex; flex-direction: column; text-align: right; line-height: 21px; font-size: 14.500px; letter-spacing: -.1px; }
.t7 { margin-left: 11px; }
.cop { margin-left: 23px; position: relative; }
.cop b { position: absolute; left: 7px; bottom: -1px; width: 22px; height: 10px; background: #ffc20e; color: #222; border-radius: 2px; font: 700 8.500px/10px "Open Sans", sans-serif; text-align: center; }
```
